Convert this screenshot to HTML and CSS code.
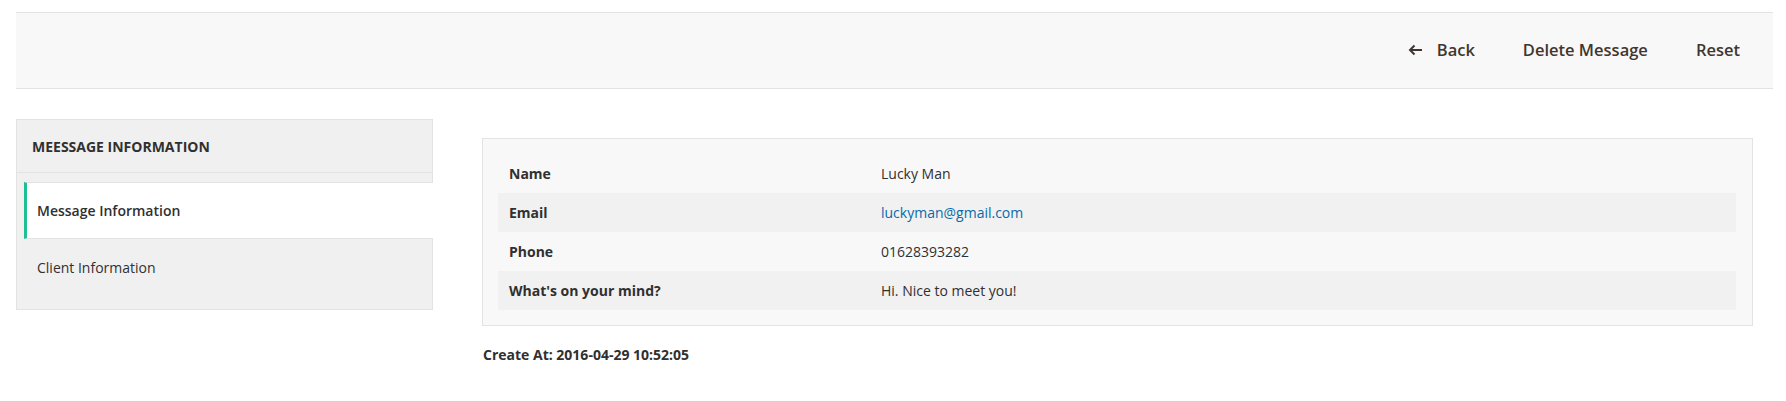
FILE: index.html
```html
<!DOCTYPE html>
<html lang="en">
<head>
<meta charset="utf-8">
<title>Message</title>
<link rel="stylesheet" href="styles.css">
</head>
<body>
<div class="page-actions">
  <button class="action back" type="button">
    <svg class="back-icon" width="15" height="12" viewBox="0 0 15 12" aria-hidden="true"><path d="M14 6H2M6.5 1.5L2 6l4.5 4.5" fill="none" stroke="#41362f" stroke-width="2"/></svg>
    <span>Back</span>
  </button>
  <button class="action" type="button">Delete Message</button>
  <button class="action" type="button">Reset</button>
</div>

<div class="page-columns">
  <aside class="side-col">
    <div class="page-nav">
      <div class="page-nav-title">MEESSAGE INFORMATION</div>
      <ul class="page-nav-items">
        <li class="page-nav-item active"><a class="page-nav-link" href="#">Message Information</a></li>
        <li class="page-nav-item"><a class="page-nav-link" href="#">Client Information</a></li>
      </ul>
    </div>
  </aside>

  <main class="main-col">
    <div class="info-panel">
      <table class="info-table">
        <tbody>
          <tr><th>Name</th><td>Lucky Man</td></tr>
          <tr><th>Email</th><td><a href="#">luckyman@gmail.com</a></td></tr>
          <tr><th>Phone</th><td>01628393282</td></tr>
          <tr><th>What's on your mind?</th><td>Hi. Nice to meet you!</td></tr>
        </tbody>
      </table>
    </div>
    <p class="created">Create At: 2016-04-29 10:52:05</p>
  </main>
</div>
</body>
</html>
```

FILE: styles.css
```css
* { box-sizing: border-box; }

body {
  margin: 0;
  padding: 12px 13px 0 16px;
  font-family: "Open Sans", "Liberation Sans", sans-serif;
  font-size: 14px;
  color: #303030;
  background: #fff;
}

.page-actions {
  display: flex;
  justify-content: flex-end;
  align-items: center;
  height: 77px;
  padding: 0 18px 2px 0;
  background: #f8f8f8;
  border-top: 1px solid #e3e3e3;
  border-bottom: 1px solid #e3e3e3;
}

.action {
  display: flex;
  align-items: center;
  gap: 14px;
  border: 0;
  background: transparent;
  font-family: inherit;
  font-size: 16.5px;
  font-weight: 600;
  color: #41362f;
  padding: 8px 15px;
  margin-left: 18px;
  cursor: pointer;
}

.back-icon { display: block; }

.page-columns {
  display: flex;
  align-items: flex-start;
  margin-top: 30px;
}

.side-col {
  width: 417px;
  flex: none;
}

.page-nav {
  background: #f0f0f0;
  border: 1px solid #e3e3e3;
  padding-bottom: 13px;
}

.page-nav-title {
  height: 53px;
  display: flex;
  align-items: center;
  padding-left: 15px;
  font-weight: 700;
  font-size: 14px;
  color: #303030;
  border-bottom: 1px solid #e3e3e3;
}

.page-nav-items {
  list-style: none;
  margin: 0;
  padding: 9px 0 0 7px;
}

.page-nav-item { margin: 0; }

.page-nav-link {
  display: flex;
  align-items: center;
  height: 57px;
  padding-left: 10px;
  border-left: 3px solid transparent;
  border-top: 1px solid transparent;
  border-bottom: 1px solid transparent;
  color: #303030;
  text-decoration: none;
  font-size: 14px;
}

.page-nav-item.active .page-nav-link {
  background: #fff;
  border-left-color: #1fbf96;
  border-top-color: #e3e3e3;
  border-bottom-color: #e3e3e3;
  margin-right: -1px;
  font-weight: 600;
}

.main-col {
  flex: 1;
  margin-left: 49px;
  margin-right: 20px;
  padding-top: 19px;
}

.info-panel {
  background: #f8f8f8;
  border: 1px solid #e3e3e3;
  padding: 15px 16px 15px 15px;
}

.info-table {
  width: 100%;
  border-collapse: collapse;
}

.info-table th,
.info-table td {
  height: 39px;
  padding: 0 11px;
  text-align: left;
  vertical-align: middle;
  font-size: 14px;
}

.info-table th {
  width: 372px;
  font-weight: 700;
  color: #303030;
}

.info-table td { color: #303030; }

.info-table tr:nth-child(even) { background: #f1f1f1; }

.info-table a {
  color: #0a6aa8;
  text-decoration: none;
}

.created {
  margin: 19px 0 0 1px;
  font-weight: 700;
  font-size: 14px;
  color: #303030;
}
```
